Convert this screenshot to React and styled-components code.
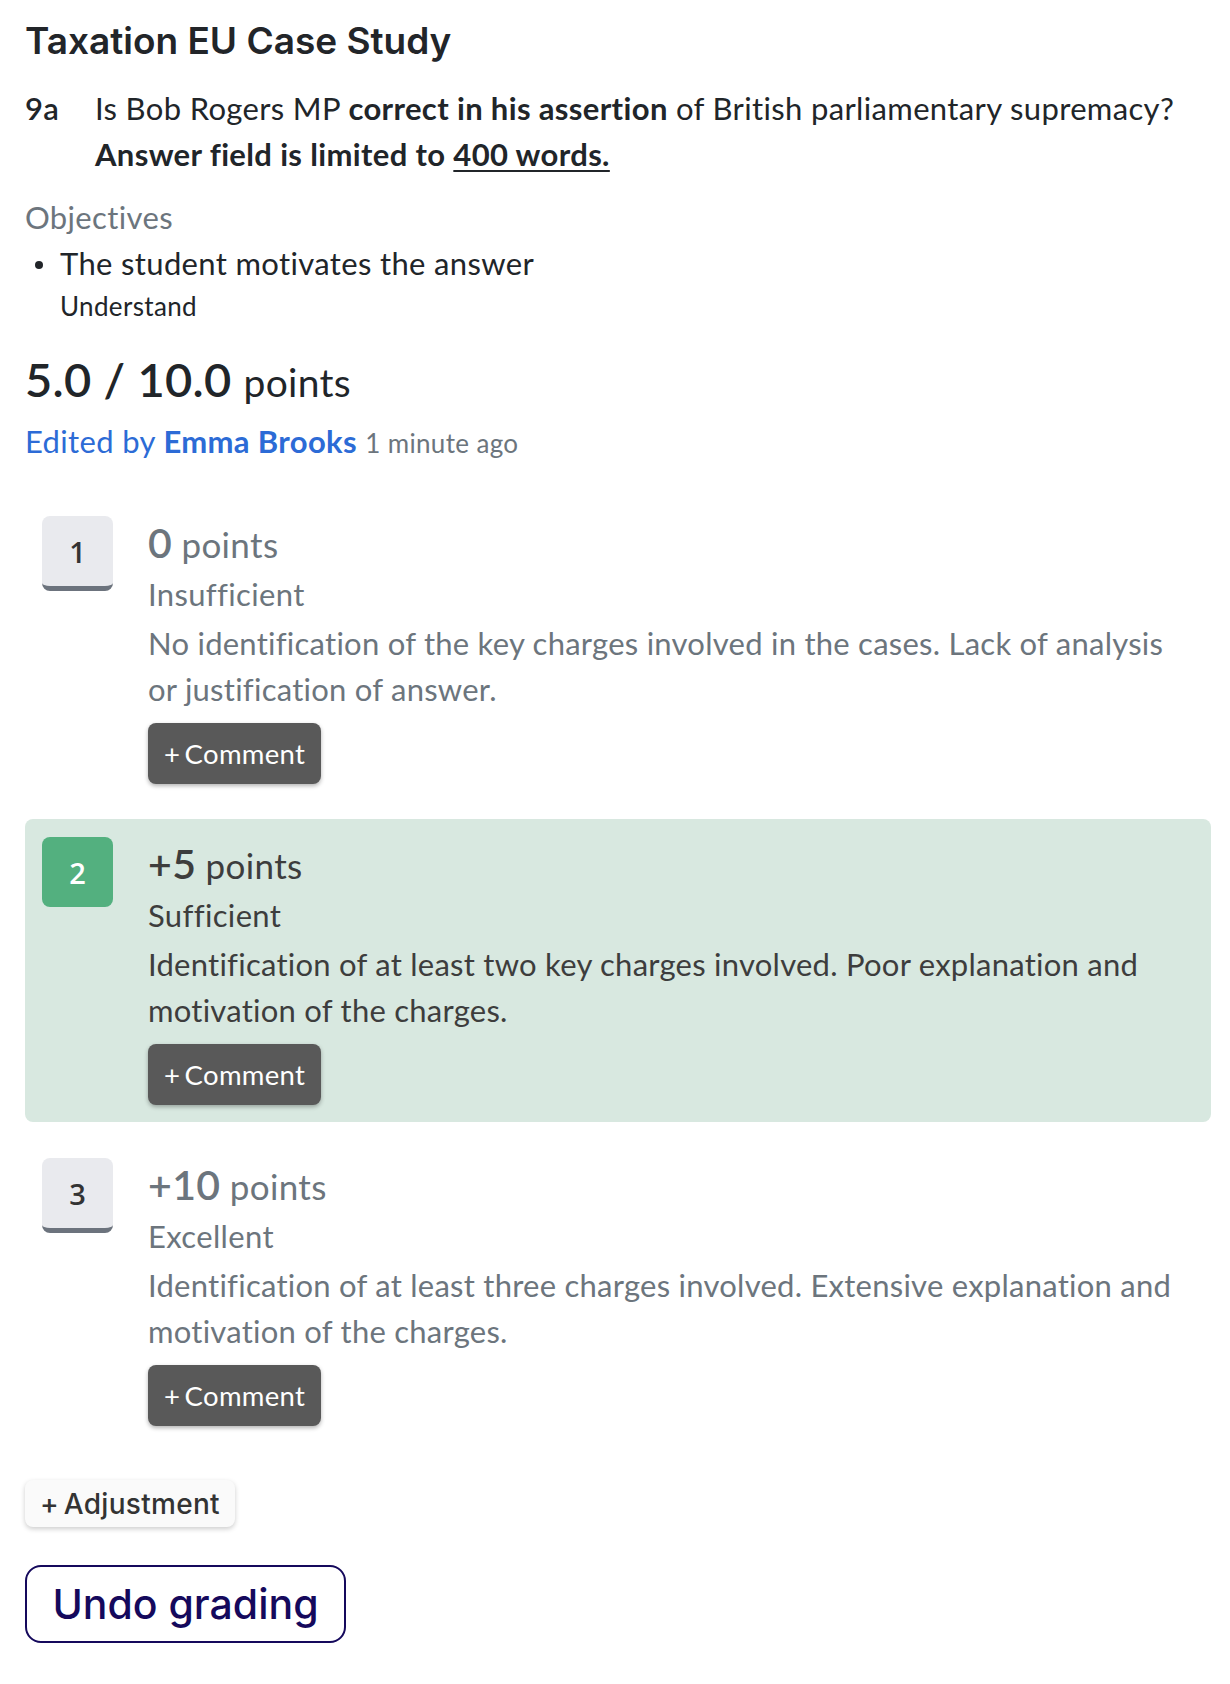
import styled, { createGlobalStyle } from "styled-components";

const GlobalStyle = createGlobalStyle`
  body {
    margin: 0;
    background: #ffffff;
    font-family: "Lato", "Noto Sans", sans-serif;
    letter-spacing: 0.35px;
    color: #212529;
  }
`;

const criteria = [
  {
    id: 1,
    sign: "",
    value: 0,
    label: "Insufficient",
    text: "No identification of the key charges involved in the cases. Lack of analysis or justification of answer.",
  },
  {
    id: 2,
    sign: "+",
    value: 5,
    label: "Sufficient",
    text: "Identification of at least two key charges involved. Poor explanation and motivation of the charges.",
    selected: true,
  },
  {
    id: 3,
    sign: "+",
    value: 10,
    label: "Excellent",
    text: "Identification of at least three charges involved. Extensive explanation and motivation of the charges.",
  },
];

const App = () => {
  return (
    <Page>
      <GlobalStyle />
      <Title>Taxation EU Case Study</Title>

      <Question>
        <QNumber>9a</QNumber>
        <QText>
          <div>
            Is Bob Rogers MP <b>correct in his assertion</b> of British
            parliamentary supremacy?
          </div>
          <div>
            <b>
              Answer field is limited to <u>400 words.</u>
            </b>
          </div>
        </QText>
      </Question>

      <SectionLabel>Objectives</SectionLabel>
      <Objectives>
        <li>The student motivates the answer</li>
      </Objectives>
      <Level>Understand</Level>

      <Score>
        5.0 / 10.0 <ScoreUnit>points</ScoreUnit>
      </Score>
      <Edited>
        Edited by <b>Emma Brooks</b> <Ago>1 minute ago</Ago>
      </Edited>

      <Criteria>
        {criteria.map((c) => (
          <Criterion key={c.id} $selected={c.selected}>
            <Badge $selected={c.selected}>{c.id}</Badge>
            <Body $selected={c.selected}>
              <Points>
                <PointsValue>
                  {c.sign}
                  {c.value}
                </PointsValue>{" "}
                points
              </Points>
              <Label>{c.label}</Label>
              <Description>{c.text}</Description>
              <CommentButton>+ Comment</CommentButton>
            </Body>
          </Criterion>
        ))}
      </Criteria>

      <AdjustButton>+ Adjustment</AdjustButton>
      <UndoButton>Undo grading</UndoButton>
    </Page>
  );
};

const Page = styled.div`
  padding: 20px 19px 40px 25px;
`;

const Title = styled.h1`
  margin: 0;
  font-family: "Inter", "Noto Sans", sans-serif;
  font-weight: 600;
  font-size: 37px;
  line-height: 42px;
  letter-spacing: 0;
  color: #222529;
`;

const Question = styled.div`
  display: flex;
  margin-top: 23px;
  font-size: 31px;
  line-height: 46px;
  color: #212529;
`;

const QNumber = styled.div`
  width: 70px;
  flex-shrink: 0;
  font-weight: 600;
`;

const QText = styled.div`
  flex: 1;
  b {
    font-weight: 700;
  }
  u {
    text-decoration-thickness: 2px;
    text-underline-offset: 4px;
  }
`;

const SectionLabel = styled.div`
  margin-top: 17px;
  font-size: 31px;
  line-height: 46px;
  color: #6c757d;
`;

const Objectives = styled.ul`
  margin: 0;
  padding: 0 0 0 35px;
  list-style: none;
  font-size: 31px;
  line-height: 46px;
  color: #212529;

  li {
    position: relative;
  }
  li::before {
    content: "";
    position: absolute;
    left: -25px;
    top: 21px;
    width: 8px;
    height: 8px;
    border-radius: 50%;
    background: #212529;
  }
`;

const Level = styled.div`
  padding-left: 35px;
  font-size: 26px;
  line-height: 40px;
  color: #212529;
`;

const Score = styled.div`
  margin-top: 23px;
  font-size: 47px;
  line-height: 60px;
  font-weight: 600;
  letter-spacing: 0.3px;
  color: #212529;
`;

const ScoreUnit = styled.span`
  font-size: 39px;
  font-weight: 400;
`;

const Edited = styled.div`
  margin-top: 6px;
  font-size: 31px;
  line-height: 46px;
  color: #2c6bd6;

  b {
    font-weight: 700;
  }
`;

const Ago = styled.span`
  font-size: 26px;
  color: #6c757d;
`;

const Criteria = styled.div`
  display: flex;
  flex-direction: column;
  gap: 18px;
  margin-top: 32px;
`;

const Criterion = styled.div`
  display: grid;
  grid-template-columns: 71px 1fr;
  column-gap: 35px;
  align-items: start;
  padding: 18px 18px 17px 17px;
  border-radius: 8px;
  background: ${(p) => (p.$selected ? "#d8e8e0" : "transparent")};
`;

const Badge = styled.div`
  display: flex;
  align-items: center;
  justify-content: center;
  height: 70px;
  border-radius: 8px;
  font-family: "Open Sans", "Noto Sans", sans-serif;
  font-size: 29px;
  font-weight: 600;
  letter-spacing: 0;
  background: ${(p) => (p.$selected ? "#53b07f" : "#e9eaee")};
  color: ${(p) => (p.$selected ? "#ffffff" : "#333333")};
  border-bottom: ${(p) => (p.$selected ? "none" : "5px solid #6c737d")};
`;

const Body = styled.div`
  color: ${(p) => (p.$selected ? "#3d3d3d" : "#6c757d")};
`;

const Points = styled.div`
  font-size: 35px;
  line-height: 54px;
`;

const PointsValue = styled.span`
  font-size: 41px;
  font-weight: 600;
`;

const Label = styled.div`
  font-size: 31px;
  line-height: 46px;
`;

const Description = styled.div`
  margin-top: 3px;
  font-size: 31px;
  line-height: 46px;
  letter-spacing: 0.25px;
  max-width: 1045px;
`;

const CommentButton = styled.button`
  display: block;
  margin-top: 11px;
  height: 61px;
  padding: 0 16px;
  border: none;
  border-radius: 8px;
  background: #595959;
  color: #ffffff;
  font-family: "Lato", "Noto Sans", sans-serif;
  font-size: 27.5px;
  letter-spacing: 0.3px;
  word-spacing: -3px;
  box-shadow: 0 2px 4px rgba(0, 0, 0, 0.3);
  cursor: pointer;
`;

const AdjustButton = styled.button`
  display: block;
  margin-top: 37px;
  height: 47px;
  padding: 0 15px;
  border: none;
  border-radius: 8px;
  background: #fafafa;
  color: #333333;
  font-family: "Inter", "Noto Sans", sans-serif;
  font-size: 28px;
  font-weight: 500;
  letter-spacing: 0.3px;
  word-spacing: -3px;
  box-shadow: 0 2px 5px rgba(0, 0, 0, 0.2);
  cursor: pointer;
`;

const UndoButton = styled.button`
  display: block;
  margin-top: 38px;
  width: 321px;
  height: 78px;
  border: 2px solid #15095c;
  border-radius: 16px;
  background: #ffffff;
  color: #15095c;
  font-family: "Inter", "Noto Sans", sans-serif;
  font-size: 41px;
  font-weight: 500;
  cursor: pointer;
`;

export default App;
